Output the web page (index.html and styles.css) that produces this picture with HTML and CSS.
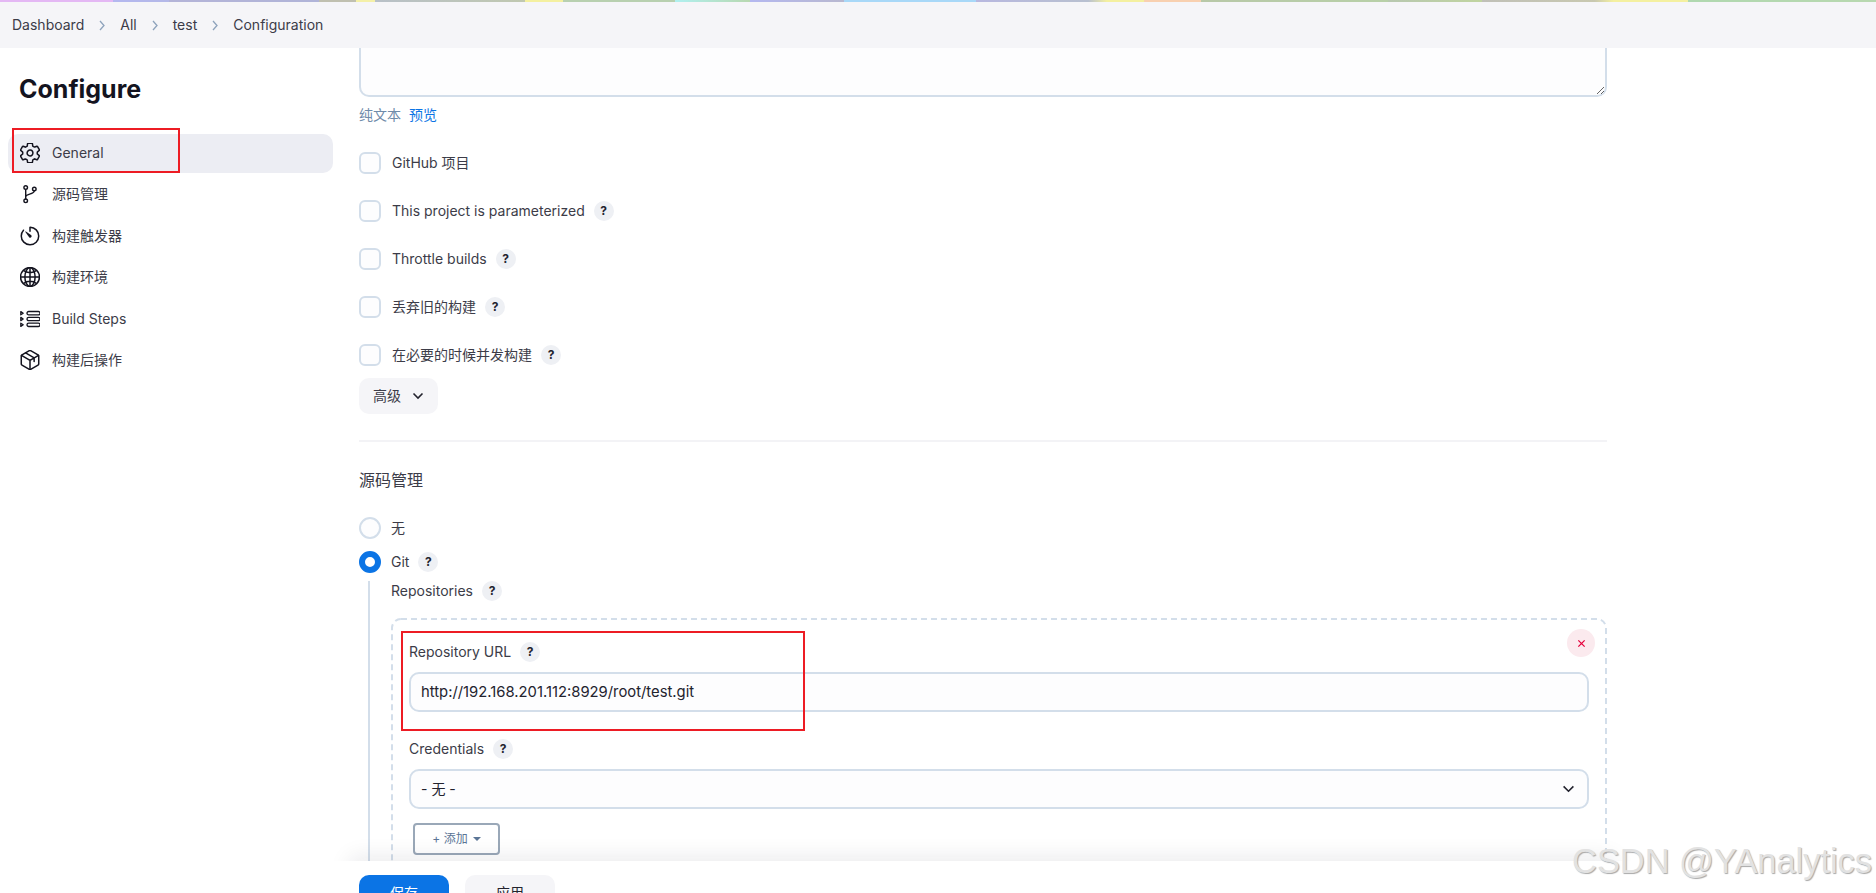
FILE: index.html
```html
<!DOCTYPE html>
<html lang="zh">
<head>
  <meta charset="UTF-8">
  <title>test Config</title>
  <link rel="stylesheet" href="styles.css">
</head>
<body>
  <div class="strip"></div>
  <nav class="crumbs">
    <a href="#">Dashboard</a>
    <svg class="sep" viewBox="0 0 6 11"><path d="M1 1l4 4.5-4 4.5"/></svg>
    <a href="#">All</a>
    <svg class="sep" viewBox="0 0 6 11"><path d="M1 1l4 4.5-4 4.5"/></svg>
    <a href="#">test</a>
    <svg class="sep" viewBox="0 0 6 11"><path d="M1 1l4 4.5-4 4.5"/></svg>
    <a href="#">Configuration</a>
  </nav>

  <div class="layout">
    <aside class="side">
      <h1>Configure</h1>
      <ul class="tasks">
        <li class="task active">
          <svg viewBox="36 36 440 440" class="icon"><path d="M262.29 192.31a64 64 0 1057.4 57.4 64.13 64.13 0 00-57.4-57.4zM416.39 256a154.34 154.34 0 01-1.53 20.79l45.21 35.46a10.81 10.81 0 012.45 13.75l-42.77 74a10.81 10.81 0 01-13.14 4.59l-44.9-18.08a16.11 16.11 0 00-15.17 1.75A164.48 164.48 0 01325 400.8a15.94 15.94 0 00-8.82 12.14l-6.73 47.89a11.08 11.08 0 01-10.68 9.17h-85.54a11.11 11.11 0 01-10.69-8.87l-6.72-47.82a16.07 16.07 0 00-9-12.22 155.3 155.3 0 01-21.46-12.57 16 16 0 00-15.11-1.71l-44.89 18.07a10.81 10.81 0 01-13.14-4.58l-42.77-74a10.8 10.8 0 012.45-13.75l38.21-30a16.05 16.05 0 006-14.08c-.36-4.17-.58-8.33-.58-12.5s.21-8.27.58-12.35a16 16 0 00-6.07-13.94l-38.19-30A10.81 10.81 0 0149.48 186l42.77-74a10.81 10.81 0 0113.14-4.59l44.9 18.08a16.11 16.11 0 0015.17-1.75A164.48 164.48 0 01187 111.2a15.94 15.94 0 008.82-12.14l6.73-47.89A11.08 11.08 0 01213.23 42h85.54a11.11 11.11 0 0110.69 8.87l6.72 47.82a16.07 16.07 0 009 12.22 155.3 155.3 0 0121.46 12.57 16 16 0 0015.11 1.71l44.89-18.07a10.81 10.81 0 0113.14 4.58l42.77 74a10.8 10.8 0 01-2.45 13.75l-38.21 30a16.05 16.05 0 00-6.05 14.08c.33 4.14.55 8.3.55 12.47z"/></svg>
          General
        </li>
        <li class="task">
          <svg viewBox="0 0 512 512" class="icon branch"><circle cx="146" cy="92" r="46"/><circle cx="146" cy="430" r="46"/><circle cx="366" cy="128" r="46"/><path d="M146 138v246M366 174c0 100-220 70-220 150"/></svg>
          源码管理
        </li>
        <li class="task">
          <svg viewBox="36 36 440 440" class="icon"><path d="M112.91 128A191.85 191.85 0 0064 254c-1.18 106.35 85.65 193.8 192 194 106.2.2 192-85.83 192-192 0-104.54-83.55-189.61-187.5-192a4.36 4.36 0 00-4.5 4.37V152"/><path class="solid" d="M233.38 278.63l-79-113a8.13 8.13 0 0111.32-11.32l113 79a32.5 32.5 0 01-37.25 53.26 33.21 33.21 0 01-8.07-7.94z"/></svg>
          构建触发器
        </li>
        <li class="task">
          <svg viewBox="36 36 440 440" class="icon"><path d="M256 48C141.13 48 48 141.13 48 256s93.13 208 208 208 208-93.13 208-208S370.87 48 256 48z"/><path d="M256 48c-58.07 0-112.67 93.13-112.67 208S197.93 464 256 464s112.67-93.13 112.67-208S314.07 48 256 48z"/><path d="M117.33 117.33c38.24 27.15 86.38 43.34 138.67 43.34s100.43-16.19 138.67-43.34M394.67 394.67c-38.24-27.15-86.38-43.34-138.67-43.34s-100.43 16.19-138.67 43.34M256 48v416M464 256H48"/></svg>
          构建环境
        </li>
        <li class="task">
          <svg viewBox="0 0 20 20" class="icon thin"><rect x="7" y="2.5" width="13" height="3.4" rx="1.7"/><rect x="7" y="8.3" width="13" height="3.4" rx="1.7"/><rect x="7" y="14.1" width="13" height="3.4" rx="1.7"/><path d="M.8 2.6l2.4 1.6-2.4 1.6zM.8 8.4l2.4 1.6-2.4 1.6zM.8 14.2l2.4 1.6-2.4 1.6z"/></svg>
          Build Steps
        </li>
        <li class="task">
          <svg viewBox="36 36 440 440" class="icon"><path d="M448 341.37V170.61A32 32 0 00432.11 143l-152-88.46a47.94 47.94 0 00-48.24 0L79.89 143A32 32 0 0064 170.61v170.76A32 32 0 0079.89 369l152 88.46a48 48 0 0048.24 0l152-88.46A32 32 0 00448 341.37z"/><path d="M69 154l187 110 187-110M256 464V264M160 98l187 112v80"/></svg>
          构建后操作
        </li>
      </ul>
    </aside>

    <main class="form">
      <textarea class="desc"></textarea>
      <div class="desc-links"><span class="plain">纯文本</span><a href="#">预览</a></div>

      <div class="checks">
        <label class="check"><span class="box"></span>GitHub 项目</label>
        <label class="check"><span class="box"></span>This project is parameterized<span class="help">?</span></label>
        <label class="check"><span class="box"></span>Throttle builds<span class="help">?</span></label>
        <label class="check"><span class="box"></span>丢弃旧的构建<span class="help">?</span></label>
        <label class="check"><span class="box"></span>在必要的时候并发构建<span class="help">?</span></label>
      </div>

      <button class="advanced">高级
        <svg viewBox="0 0 12 8"><path d="M1.5 1.5L6 6l4.5-4.5"/></svg>
      </button>

      <hr class="rule">
      <h2>源码管理</h2>

      <div class="radio"><span class="dot"></span>无</div>
      <div class="radio"><span class="dot on"></span>Git<span class="help">?</span></div>

      <div class="git">
        <div class="label">Repositories<span class="help">?</span></div>
        <div class="repo">
          <svg class="dashes"><rect x="1" y="1" rx="9" ry="9"/></svg>
          <button class="remove">
            <svg viewBox="0 0 10 10"><path d="M1.5 1.5l7 7M8.5 1.5l-7 7"/></svg>
          </button>
          <div class="label">Repository URL<span class="help">?</span></div>
          <input class="field url" value="http://192.168.201.112:8929/root/test.git">
          <div class="label next">Credentials<span class="help">?</span></div>
          <div class="field select">- 无 -
            <svg viewBox="0 0 14 9"><path d="M1.5 1.5L7 7l5.5-5.5"/></svg>
          </div>
          <button class="add">+ 添加<span class="caret"></span></button>
        </div>
      </div>
    </main>
  </div>

  <div class="bar-shade"></div>
  <div class="bar">
    <button class="btn primary">保存</button>
    <button class="btn">应用</button>
  </div>

  <div class="mark mark-general"></div>
  <div class="mark mark-url"></div>
  <div class="watermark">CSDN @YAnalytics</div>
</body>
</html>
```

FILE: styles.css
```css
* {
  box-sizing: border-box;
}

html, body {
  margin: 0;
  height: 893px;
  overflow: hidden;
}

body {
  position: relative;
  background: #fff;
  color: #3c3c48;
  font: 14px/20px Inter, "Noto Sans CJK SC", sans-serif;
}

button, input {
  font: inherit;
}

.strip {
  height: 2px;
  background: linear-gradient(90deg,
    #e4b8f4 0, #e4b8f4 6%, #b4b8f0 6%, #b4b8e8 9%, #b4b4d8 9%, #b0b4d8 17%,
    #c0c0b0 17%, #c0c0b0 19%, #f4f0a8 19%, #f4f0a8 20%, #b8c0c8 20%, #c0c8b0 28%,
    #f4f0a0 28%, #f4f0a0 30%, #b8d0b0 30%, #b8d0b0 36%, #b0f0f0 36%, #b8d8b0 40%,
    #b4b8f0 40%, #b8b8d0 45%, #a8d8f8 45%, #a8d8f8 52%, #b8b8e0 52%, #b8c0d0 58%,
    #f4f0a0 59%, #f4f0a0 61%, #f8d0b0 61%, #f8d0b0 64%, #b8c8a8 64%, #b8d0a8 74%,
    #b8c8b0 74%, #c0d4a0 79%, #c0c0b8 79%, #c8c8b0 85%, #f4f0a0 86%, #f4f0a0 90%,
    #b0d8b0 90%, #b8d8b0 100%);
}

.crumbs {
  display: flex;
  align-items: center;
  gap: 15px;
  height: 46px;
  padding-left: 12px;
  background: #f5f5f8;
}

.crumbs a {
  color: #3c3c48;
  text-decoration: none;
}

.sep {
  width: 6px;
  height: 11px;
  fill: none;
  stroke: #8ea3bc;
  stroke-width: 1.3;
}

.layout {
  display: flex;
}

/* left column */
.side {
  width: 359px;
  flex: none;
  padding: 25px 26px 0 8px;
}

.side h1 {
  margin: 0 0 29px 11px;
  font-size: 25px;
  line-height: 32px;
  font-weight: 700;
  color: #14141f;
}

.tasks {
  display: flex;
  flex-direction: column;
  gap: 2.6px;
  margin: 0;
  padding: 0;
  list-style: none;
}

.task {
  display: flex;
  align-items: center;
  gap: 12px;
  height: 39px;
  padding: 0 0 2px 12px;
  border-radius: 10px;
}

.task.active {
  background: #ecedf3;
}

.icon {
  width: 20px;
  height: 20px;
  flex: none;
  fill: none;
  stroke: #14141f;
  stroke-width: 33;
  stroke-linecap: round;
  stroke-linejoin: round;
}

.icon.branch {
  stroke-width: 36;
}

.icon.thin {
  stroke-width: 1.3;
}

.icon .solid {
  fill: #14141f;
  stroke: none;
}

/* form */
.form {
  width: 1248px;
}

.desc {
  display: block;
  width: 100%;
  height: 49px;
  border: 2px solid #d3deea;
  border-top: 0;
  border-radius: 0 0 10px 10px;
  background: #fdfdfe;
  outline: 0;
  resize: vertical;
}

.desc-links {
  display: flex;
  gap: 8px;
  margin-top: 8px;
  font-size: 14px;
}

.desc-links .plain {
  color: #6f8baa;
}

.desc-links a {
  color: #0b74e5;
  text-decoration: none;
}

.checks {
  display: flex;
  flex-direction: column;
  gap: 26px;
  margin-top: 27px;
}

.check {
  display: flex;
  align-items: center;
  height: 22px;
}

.box {
  width: 22px;
  height: 22px;
  margin-right: 11px;
  border: 2px solid #d3deea;
  border-radius: 6px;
  background: #fdfdfe;
}

.help {
  display: inline-flex;
  align-items: center;
  justify-content: center;
  width: 20px;
  height: 20px;
  margin-left: 9px;
  border-radius: 50%;
  background: #eef0f4;
  color: #23232e;
  font-size: 12px;
  font-weight: 700;
}

.advanced {
  display: flex;
  align-items: center;
  justify-content: space-between;
  width: 79px;
  height: 36px;
  margin-top: 12px;
  padding: 0 14px;
  border: 0;
  border-radius: 10px;
  background: #f5f5f8;
  color: #3c3c48;
}

.advanced svg {
  width: 12px;
  height: 8px;
  fill: none;
  stroke: #23232e;
  stroke-width: 1.6;
}

.rule {
  height: 2px;
  margin: 26px 0 0;
  border: 0;
  background: #f3f3f6;
}

.form h2 {
  margin: 26px 0 25px;
  font-size: 16px;
  line-height: 24px;
  font-weight: 400;
}

.radio {
  display: flex;
  align-items: center;
  height: 22px;
  margin-bottom: 12px;
}

.dot {
  width: 22px;
  height: 22px;
  margin-right: 10px;
  border: 2px solid #d3deea;
  border-radius: 50%;
  background: #fdfdfe;
}

.dot.on {
  border: 6px solid #0b74e5;
  background: #fff;
}

/* git block */
.git {
  margin: -4px 0 0 9px;
  padding-left: 21px;
  border-left: 2px solid #d3deea;
}

.label {
  display: flex;
  align-items: center;
  height: 20px;
}

.repo {
  position: relative;
  margin-top: 17px;
  padding: 24px 18px 32px;
}

.dashes {
  position: absolute;
  left: 0;
  top: 0;
  width: 100%;
  height: 100%;
  fill: none;
  stroke: #d3deea;
  stroke-width: 2;
  stroke-dasharray: 6 4;
}

.dashes rect {
  width: calc(100% - 2px);
  height: calc(100% - 2px);
}

.remove {
  position: absolute;
  top: 11px;
  right: 12px;
  display: flex;
  align-items: center;
  justify-content: center;
  width: 28px;
  height: 28px;
  padding: 0;
  border: 0;
  border-radius: 50%;
  background: #fbeaee;
}

.remove svg {
  width: 9px;
  height: 9px;
  fill: none;
  stroke: #e6003c;
  stroke-width: 1.4;
}

.field {
  display: block;
  width: 100%;
  height: 40px;
  margin-top: 10px;
  padding: 0 11px 0 10px;
  border: 2px solid #d3deea;
  border-radius: 10px;
  background: #fdfdfe;
  color: #23232e;
  outline: 0;
}

.url {
  font-size: 14.8px;
}

.label.next {
  margin-top: 27px;
}

.select {
  display: flex;
  align-items: center;
  justify-content: space-between;
  padding-right: 12px;
}

.select svg {
  width: 13px;
  height: 8px;
  fill: none;
  stroke: #23232e;
  stroke-width: 1.8;
}

.add {
  display: flex;
  align-items: center;
  justify-content: center;
  gap: 5px;
  width: 87px;
  height: 32px;
  margin: 14px 0 0 4px;
  padding: 0;
  border: 2px solid #9aa8b8;
  border-radius: 4px;
  background: #fff;
  color: #5b7596;
  font-size: 12px;
}

.caret {
  width: 0;
  height: 0;
  border: 4px solid transparent;
  border-top-color: #5b7596;
  border-bottom: 0;
}

/* bottom bar, sticks over the form */
.bar-shade {
  position: absolute;
  left: 350px;
  top: 861px;
  width: 1265px;
  height: 32px;
  box-shadow: 0 -4px 22px rgba(20, 20, 40, .09);
}

.bar {
  position: absolute;
  left: 0;
  right: 0;
  top: 861px;
  height: 32px;
  overflow: hidden;
  display: flex;
  align-items: flex-start;
  gap: 16px;
  padding: 14px 0 0 359px;
  background: #fff;
}

.btn {
  width: 90px;
  height: 36px;
  flex: none;
  padding: 0;
  border: 0;
  border-radius: 10px;
  background: #f5f5f8;
  color: #23232e;
}

.btn.primary {
  background: #0b74e5;
  color: #fff;
}

/* annotations drawn on the screenshot */
.mark {
  position: absolute;
  border: 2px solid #ed1c24;
}

.mark-general {
  left: 12px;
  top: 128px;
  width: 168px;
  height: 45px;
}

.mark-url {
  left: 401px;
  top: 631px;
  width: 404px;
  height: 100px;
}

.watermark {
  position: absolute;
  right: 4px;
  top: 839px;
  font: 34.4px/44px "Liberation Sans", sans-serif;
  color: #e2e2e2;
  text-shadow: 1px 1px 1px #a8a8a8;
  white-space: nowrap;
}
```
